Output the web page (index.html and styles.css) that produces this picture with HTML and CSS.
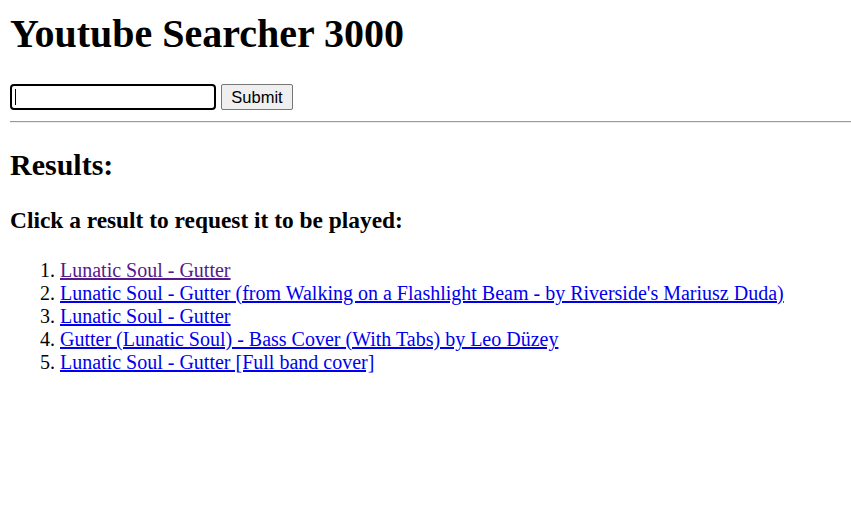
FILE: index.html
```html
<!DOCTYPE html>
<html>
<head>
<meta charset="utf-8">
<title>Youtube Searcher 3000</title>
<link rel="stylesheet" href="styles.css">
</head>
<body>
<h1 class="title">Youtube Searcher 3000</h1>
<form class="search">
  <span class="input-wrap"><input class="search-input" type="text"></span>
  <button class="search-btn" type="button">Submit</button>
</form>
<hr class="divider">
<h2 class="results-title">Results:</h2>
<h3 class="results-hint">Click a result to request it to be played:</h3>
<ol class="results">
  <li><a class="visited" href="#">Lunatic Soul - Gutter</a></li>
  <li><a href="#">Lunatic Soul - Gutter (from Walking on a Flashlight Beam - by Riverside's Mariusz Duda)</a></li>
  <li><a href="#">Lunatic Soul - Gutter</a></li>
  <li><a href="#">Gutter (Lunatic Soul) - Bass Cover (With Tabs) by Leo Düzey</a></li>
  <li><a href="#">Lunatic Soul - Gutter [Full band cover]</a></li>
</ol>
</body>
</html>
```
FILE: styles.css
```css
html, body {
  background: #fff;
}
body {
  margin: 0 0 0 10px;
  font-family: "Liberation Serif", "Times New Roman", serif;
  font-size: 20px;
  color: #000;
}
.title {
  font-size: 40px;
  font-weight: bold;
  margin: 11px 0 0;
  line-height: 46px;
}
.search {
  display: flex;
  align-items: center;
  gap: 5px;
  margin-top: 27px;
  height: 26px;
}
.input-wrap {
  position: relative;
  display: block;
  height: 26px;
}
.input-wrap::after {
  content: "";
  position: absolute;
  left: 5px;
  top: 5px;
  width: 1px;
  height: 16px;
  background: #000;
}
.search-input {
  box-sizing: border-box;
  display: block;
  width: 206px;
  height: 26px;
  margin: 0;
  border: 2.5px solid #000;
  border-radius: 4px;
  outline: none;
  padding: 1px 3px;
  font-family: "Liberation Sans", Arial, sans-serif;
  font-size: 16px;
}
.search-btn {
  box-sizing: border-box;
  width: 72px;
  height: 26px;
  margin: 0;
  padding: 0;
  border: 1px solid #767676;
  border-radius: 2px;
  background: #efefef;
  font-family: "Liberation Sans", Arial, sans-serif;
  font-size: 16.5px;
  color: #000;
}
.divider {
  margin: 11px 0 0;
  border: none;
  border-top: 1.5px solid #9a9a9a;
  border-bottom: 1px solid #eee;
  height: 0;
}
.results-title {
  font-size: 30px;
  font-weight: bold;
  margin: 24px 0 0;
  line-height: 35px;
}
.results-hint {
  font-size: 23.4px;
  font-weight: bold;
  margin: 25px 0 0;
  line-height: 27px;
}
.results {
  margin: 25px 0 0;
  padding-left: 50px;
  line-height: 23px;
}
.results a {
  color: #0000ee;
}
.results a.visited {
  color: #551a8b;
}
```
